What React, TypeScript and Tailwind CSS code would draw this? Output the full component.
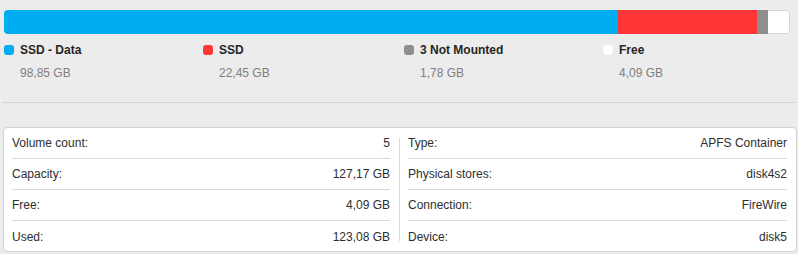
import React from 'react';

const segments = [
  { name: 'SSD - Data', size: '98,85 GB', color: 'bg-[#00adf0]', width: 614, col: 'w-[199px]' },
  { name: 'SSD', size: '22,45 GB', color: 'bg-[#ff3637]', width: 139, col: 'w-[201px]' },
  { name: '3 Not Mounted', size: '1,78 GB', color: 'bg-[#8e8e8e]', width: 11, col: 'w-[199px]' },
  { name: 'Free', size: '4,09 GB', color: 'bg-white', width: 22, col: 'w-[180px]' },
];

const left = [
  ['Volume count:', '5'],
  ['Capacity:', '127,17 GB'],
  ['Free:', '4,09 GB'],
  ['Used:', '123,08 GB'],
];

const right = [
  ['Type:', 'APFS Container'],
  ['Physical stores:', 'disk4s2'],
  ['Connection:', 'FireWire'],
  ['Device:', 'disk5'],
];

function InfoColumn({ rows, className }: { rows: string[][]; className: string }) {
  return (
    <div className={className}>
      {rows.map(([label, value], i) => (
        <div
          key={label}
          className={`h-[31px] flex items-center justify-between ${i < rows.length - 1 ? 'border-b border-[#d9d9d9]' : ''}`}
        >
          <span>{label}</span>
          <span>{value}</span>
        </div>
      ))}
    </div>
  );
}

export default function App() {
  return (
    <div
      className="w-[798px] h-[254px] bg-[#ececec] pt-[10px] overflow-hidden text-[12px]"
      style={{ fontFamily: '"Liberation Sans", Arial, sans-serif' }}
    >
      {/* Usage bar */}
      <div className="ml-[4px] w-[786px] h-[24px] flex rounded-[4px] overflow-hidden">
        {segments.map((s, i) => (
          <div
            key={s.name}
            className={`${s.color} h-full ${i === segments.length - 1 ? 'rounded-r-[4px] border border-l-0 border-[#d6d6d6]' : ''}`}
            style={{ width: s.width }}
          />
        ))}
      </div>

      {/* Legend */}
      <div className="ml-[4px] mt-[11px] flex">
        {segments.map((s) => (
          <div key={s.name} className={s.col}>
            <div className="flex items-center gap-[6px] h-[10px]">
              <span className={`w-[10px] h-[10px] rounded-[3px] shrink-0 ${s.color}`} />
              <span className="font-bold text-[#262626] leading-none">{s.name}</span>
            </div>
            <div className="pl-[16px] mt-[11px] text-[#808080] leading-[14px]">{s.size}</div>
          </div>
        ))}
      </div>

      <div className="ml-[2px] mr-[2px] mt-[22px] h-px bg-[#d2d2d2]" />

      {/* Info panel */}
      <div className="ml-[3px] mt-[24px] w-[794px] h-[125px] bg-white border border-[#d4d4d4] rounded-[4px] flex text-[#2e2e2e]">
        <InfoColumn rows={left} className="w-[395px] pl-[8px] pr-[9px]" />
        <div className="w-px bg-[#d9d9d9] mt-[10px] mb-[10px]" />
        <InfoColumn rows={right} className="flex-1 pl-[8px] pr-[9px]" />
      </div>
    </div>
  );
}
